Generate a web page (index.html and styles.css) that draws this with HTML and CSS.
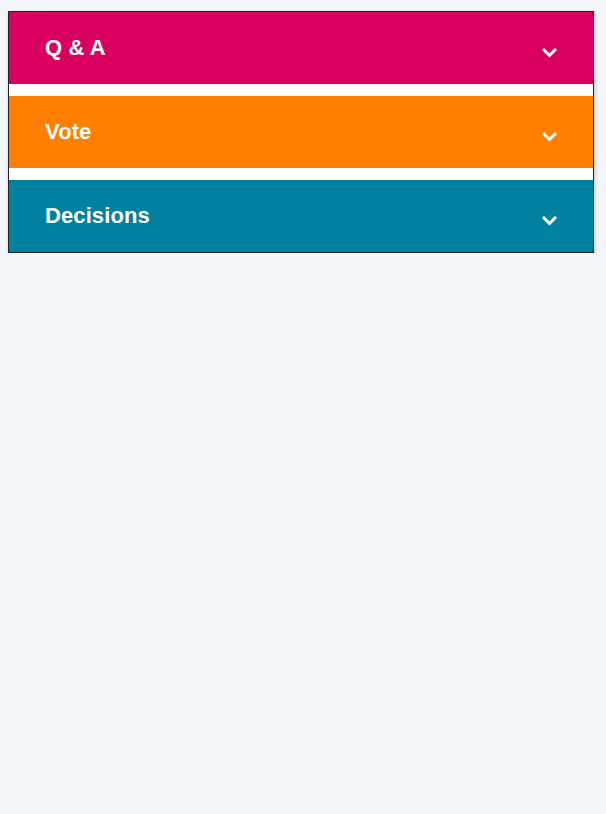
FILE: index.html
```html
<!DOCTYPE html>
<html lang="en">
<head>
<meta charset="utf-8">
<title>Accordion</title>
<link rel="stylesheet" href="styles.css">
</head>
<body>
<div class="accordion">
  <div class="panel panel-qa">
    <span class="panel-title">Q &amp; A</span>
    <svg class="chevron" width="15" height="10" viewBox="0 0 15 10"><path d="M2 2 L7.5 7.5 L13 2" fill="none" stroke="#fff" stroke-width="3" stroke-linecap="square"/></svg>
  </div>
  <div class="panel panel-vote">
    <span class="panel-title">Vote</span>
    <svg class="chevron" width="15" height="10" viewBox="0 0 15 10"><path d="M2 2 L7.5 7.5 L13 2" fill="none" stroke="#fff" stroke-width="3" stroke-linecap="square"/></svg>
  </div>
  <div class="panel panel-decisions">
    <span class="panel-title">Decisions</span>
    <svg class="chevron" width="15" height="10" viewBox="0 0 15 10"><path d="M2 2 L7.5 7.5 L13 2" fill="none" stroke="#fff" stroke-width="3" stroke-linecap="square"/></svg>
  </div>
</div>
</body>
</html>
```
FILE: styles.css
```css
html, body {
  margin: 0;
  padding: 0;
  background: #f5f6fa;
}
body {
  padding: 11px 12px 0 8px;
  font-family: "Liberation Sans", Arial, sans-serif;
}
.accordion {
  width: 584px;
  border: 1px solid #222;
  background: #fff;
  display: flex;
  flex-direction: column;
  gap: 12px;
  box-shadow: 1px 2px 4px rgba(0, 0, 0, 0.22);
}
.panel {
  height: 72px;
  display: flex;
  align-items: center;
  justify-content: space-between;
  padding: 0 36px 0 36px;
  color: #fff;
}
.panel-title {
  font-size: 22px;
  font-weight: bold;
  letter-spacing: 0.1px;
}
.chevron {
  display: block;
  margin-top: 10px;
}
.panel-qa { background: #da0060; }
.panel-vote { background: #ff7f00; }
.panel-decisions { background: #00819f; }
```
